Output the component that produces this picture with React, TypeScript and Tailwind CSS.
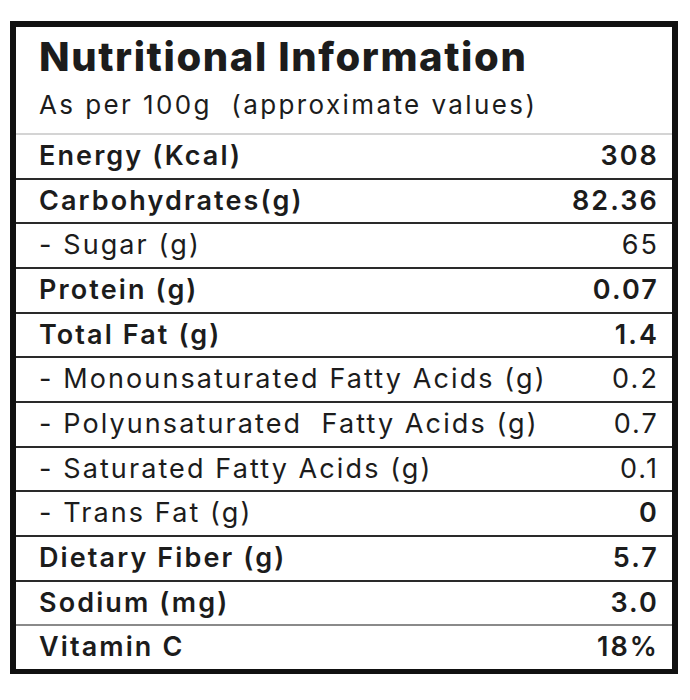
const rows: { label: string; value: string; bold?: boolean; boldValue?: boolean; line?: string }[] = [
  { label: "Energy (Kcal)", value: "308", bold: true },
  { label: "Carbohydrates(g)", value: "82.36", bold: true },
  { label: "- Sugar (g)", value: "65" },
  { label: "Protein (g)", value: "0.07", bold: true },
  { label: "Total Fat (g)", value: "1.4", bold: true },
  { label: "- Monounsaturated Fatty Acids (g)", value: "0.2" },
  { label: "- Polyunsaturated\u00a0 Fatty Acids (g)", value: "0.7" },
  { label: "- Saturated Fatty Acids (g)", value: "0.1" },
  { label: "- Trans Fat (g)", value: "0", boldValue: true },
  { label: "Dietary Fiber (g)", value: "5.7", bold: true },
  { label: "Sodium (mg)", value: "3.0", bold: true },
  { label: "Vitamin C", value: "18%", bold: true, line: "light" },
];

export default function App() {
  return (
    <div
      className="w-[690px] h-[700px] bg-white pt-[21px] pl-[10px] text-[#1c1c1c]"
      style={{ fontFamily: "Inter, 'Noto Sans', sans-serif" }}
    >
      <div className="w-[668px] h-[653px] border-[6px] border-b-[5px] border-[#111] flex flex-col">
        <div className="h-[106px] pl-[23px] pt-[8px] shrink-0">
          <h1 className="text-[40px] leading-[44px] font-extrabold tracking-[1.6px]">
            Nutritional Information
          </h1>
          <p className="mt-[10px] text-[26px] leading-[32px] tracking-[2.4px]">
            As per 100g&nbsp; (approximate values)
          </p>
        </div>
        <div className="flex-1 flex flex-col border-t-2 border-[#d4d4d4]">
          {rows.map((r, i) => (
            <div
              key={r.label}
              className={
                "flex-1 flex items-center justify-between pl-[23px] pr-[13px] text-[27px] tracking-[2.1px] " +
                (i === 0
                  ? ""
                  : r.line === "light"
                  ? "border-t-2 border-[#8a8a8a]"
                  : "border-t-2 border-[#2a2a2a]")
              }
            >
              <span className={r.bold ? "font-semibold" : "font-normal"}>{r.label}</span>
              <span className={r.bold || r.boldValue ? "font-semibold" : "font-normal"}>
                {r.value}
              </span>
            </div>
          ))}
        </div>
      </div>
    </div>
  );
}
